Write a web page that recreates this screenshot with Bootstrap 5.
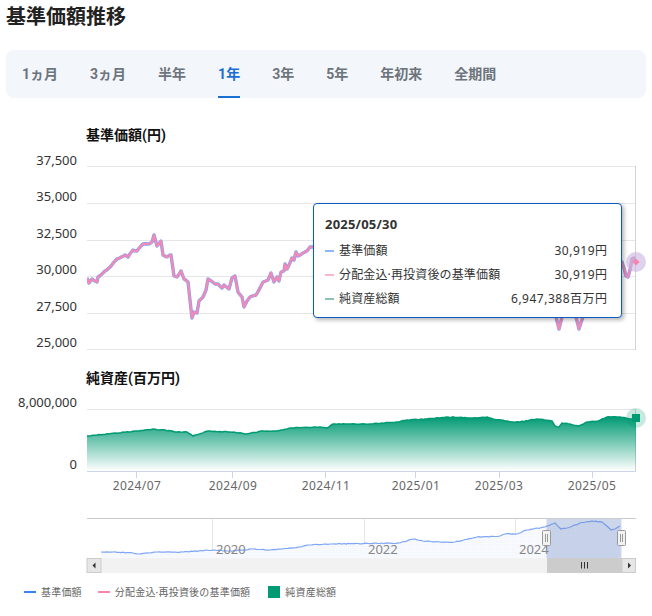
<!DOCTYPE html>
<html lang="ja">
<head>
<meta charset="utf-8">
<title>基準価額推移</title>
<link href="https://cdn.jsdelivr.net/npm/bootstrap@5.3.0/dist/css/bootstrap.min.css" rel="stylesheet">
<style>
html,body{height:616px;overflow:hidden}
body{background:#fff;font-family:"Noto Sans","Noto Sans CJK JP",sans-serif;color:#222}
.page-title{font-size:20px;font-weight:700;line-height:20px;padding:7px 0 0 6px;height:50px;margin:0;color:#222;font-family:Roboto,"Noto Sans CJK JP",sans-serif}
.range-tabs{height:48px;margin:0 6px 22px;padding-left:16px;gap:32px;background:#f3f6fa;border-radius:8px;flex-wrap:nowrap;font-family:Roboto,"Noto Sans CJK JP",sans-serif}
.range-tabs .nav-link{padding:0;height:48px;line-height:48px;font-size:14px;font-weight:700;color:#6d747c;border-bottom:2px solid transparent;white-space:nowrap}
.range-tabs .nav-link.active{color:#1a6fd4;border-bottom-color:#1a6fd4}
.chart-wrap{position:relative;width:652px;height:460px}
.chart-wrap svg{display:block}
.axis-y{font-size:13px;fill:#333;text-anchor:end}
.axis-x{font-size:12px;letter-spacing:.4px;fill:#666;text-anchor:middle}
.axis-nav{font-size:13px;fill:#888}
.chart-head{font-size:14px;font-weight:700;fill:#111;font-family:Roboto,"Noto Sans CJK JP",sans-serif}
.hint-box{position:absolute;left:313px;top:83px;width:309px;height:115px;padding:11px 14px 0 11px;background:#fff;border:1px solid #0a5cbf;border-radius:4px;box-shadow:2px 2px 4px rgba(0,0,0,.3);font-size:12px;color:#333}
.hint-date{font-size:13px;font-weight:700;line-height:18px;margin-bottom:6px;letter-spacing:.2px}
.hint-row{height:24px;line-height:24px;letter-spacing:.15px}
.hint-val{letter-spacing:.5px;margin-right:-.5px}
.hint-dash{width:9px;height:2px;margin-right:5px;flex:none}
.chart-key{height:24px;padding-left:24px;font-size:10px;color:#666;letter-spacing:.2px}
.key-dash{width:12px;height:2px;margin-right:5px}
.key-box{width:12px;height:12px;background:#009a73;margin-right:5px}
</style>
</head>
<body>
<h1 class="page-title">基準価額推移</h1>
<ul class="nav range-tabs">
<li class="nav-item"><a class="nav-link" href="#">1ヵ月</a></li>
<li class="nav-item"><a class="nav-link" href="#">3ヵ月</a></li>
<li class="nav-item"><a class="nav-link" href="#">半年</a></li>
<li class="nav-item"><a class="nav-link active" href="#">1年</a></li>
<li class="nav-item"><a class="nav-link" href="#">3年</a></li>
<li class="nav-item"><a class="nav-link" href="#">5年</a></li>
<li class="nav-item"><a class="nav-link" href="#">年初来</a></li>
<li class="nav-item"><a class="nav-link" href="#">全期間</a></li>
</ul>
<div class="chart-wrap">
<svg width="652" height="460" viewBox="0 120 652 460" xmlns="http://www.w3.org/2000/svg">
<defs>
<linearGradient id="areaFade" x1="0" y1="0" x2="0" y2="1"><stop offset="0" stop-color="#009a73"/><stop offset="1" stop-color="#009a73" stop-opacity="0"/></linearGradient>
<clipPath id="plotClip"><rect x="87" y="160" width="549" height="190"/></clipPath>
<pattern id="navDots" width="2" height="2" patternUnits="userSpaceOnUse"><rect width="2" height="2" fill="#f8fafe"/><rect width="1" height="1" fill="#eff4fd"/></pattern>
</defs>
<text class="chart-head" x="86" y="140">基準価額(円)</text>
<g stroke="#e6e6e6" stroke-width="1">
<line x1="87" x2="636" y1="166.5" y2="166.5"/><line x1="87" x2="636" y1="203.5" y2="203.5"/><line x1="87" x2="636" y1="240.5" y2="240.5"/><line x1="87" x2="636" y1="276.5" y2="276.5"/><line x1="87" x2="636" y1="313.5" y2="313.5"/><line x1="87" x2="636" y1="349.5" y2="349.5"/>
<line x1="635.5" x2="635.5" y1="166" y2="350" stroke="#d4d4d4"/>
</g>
<g class="axis-y">
<text x="77" y="165">37,500</text><text x="77" y="201">35,000</text><text x="77" y="238">32,500</text><text x="77" y="274">30,000</text><text x="77" y="311">27,500</text><text x="77" y="347">25,000</text>
</g>
<g fill="none" stroke-linejoin="round" clip-path="url(#plotClip)">
<polyline class="jag" data-amp="0.6" stroke="#7ea6f5" stroke-width="3.4" points="87,278 89,283 92,279 97,282 98,277 103,273 110,267 117,259 125,255 128,257 133,250 137,251 143,244 148,244 152,242 154,235 157,246 161,241 163,255 167,257 171,255 174,276 177,277 181,271 184,279 188,282 192,318 194,312 197,313 199,301 203,297 206,290 208,279 215,284 218,284 222,288 224,285 229,289 232,278 235,276 238,292 242,297 244,307 247,301 250,297 256,295 263,282 268,280 271,273 274,282 277,277 279,281 281,272 284,271 285,264 287,269 292,258 294,260 296,252 298,256 303,253 307,251 310,247 313,247 350,240 450,225 520,240 550,300 556,317 559,329 562,317 570,300 576,317 579,329 583,317 600,290 615,262 622,262 624,268 626,276 628,277 630,270 632,259 634,258 636,262"/>
<polyline class="jag" data-amp="0.6" stroke="#f588b5" stroke-width="2.2" points="87,278 89,283 92,279 97,282 98,277 103,273 110,267 117,259 125,255 128,257 133,250 137,251 143,244 148,244 152,242 154,235 157,246 161,241 163,255 167,257 171,255 174,276 177,277 181,271 184,279 188,282 192,318 194,312 197,313 199,301 203,297 206,290 208,279 215,284 218,284 222,288 224,285 229,289 232,278 235,276 238,292 242,297 244,307 247,301 250,297 256,295 263,282 268,280 271,273 274,282 277,277 279,281 281,272 284,271 285,264 287,269 292,258 294,260 296,252 298,256 303,253 307,251 310,247 313,247 350,240 450,225 520,240 550,300 556,317 559,329 562,317 570,300 576,317 579,329 583,317 600,290 615,262 622,262 624,268 626,276 628,277 630,270 632,259 634,258 636,262"/>
</g>
<circle cx="636" cy="262" r="10" fill="#c9b4e0" fill-opacity=".6"/>
<path d="M636 258.5l3.5 3.5-3.5 3.5-3.5-3.5z" fill="#f584ae"/>

<text class="chart-head" x="86" y="383">純資産(百万円)</text>
<line x1="87" x2="636" y1="409.5" y2="409.5" stroke="#e6e6e6"/>
<line x1="635.5" x2="635.5" y1="409" y2="471" stroke="#d4d4d4"/>
<g class="axis-y"><text x="77" y="407">8,000,000</text><text x="77" y="469">0</text></g>
<polygon id="areaFill" fill="url(#areaFade)" data-base="471" points=""/>
<polyline class="jag" data-amp="0.35" data-fill="areaFill" fill="none" stroke="#009a73" stroke-width="1.5" points="87,436 137,431 153,429 172,431 175,432 187,432 193,436 208,431 230,432 234,432 245,434 263,431 277,431 290,428 320,427 327,428 333,424 347,424 370,424 397,422 407,420 427,419 447,417 473,418 487,417 493,419 513,422 520,422 537,419 552,421 555,426 559,427 562,423 570,424 579,426 587,422 598,421 607,417 620,417 630,419 636,418"/>
<line x1="87" x2="636" y1="471.5" y2="471.5" stroke="#ccd6eb"/>
<g stroke="#ccd6eb"><line x1="136.5" x2="136.5" y1="471" y2="478"/><line x1="232.5" x2="232.5" y1="471" y2="478"/><line x1="325.5" x2="325.5" y1="471" y2="478"/><line x1="415.5" x2="415.5" y1="471" y2="478"/><line x1="499.5" x2="499.5" y1="471" y2="478"/><line x1="592.5" x2="592.5" y1="471" y2="478"/></g>
<circle cx="636" cy="418" r="10" fill="#009a73" fill-opacity=".22"/>
<rect x="632" y="414" width="8" height="8" fill="#009a73"/>
<g class="axis-x"><text x="137" y="490">2024/07</text><text x="233" y="490">2024/09</text><text x="326" y="490">2024/11</text><text x="416" y="490">2025/01</text><text x="499" y="490">2025/03</text><text x="592" y="490">2025/05</text></g>

<line x1="87" x2="636" y1="518.5" y2="518.5" stroke="#cccccc"/>
<g stroke="#e6e6e6"><line x1="212.5" x2="212.5" y1="519" y2="558"/><line x1="364.5" x2="364.5" y1="519" y2="558"/><line x1="515.5" x2="515.5" y1="519" y2="558"/></g>
<polygon id="navFill" fill="url(#navDots)" data-base="558" points=""/>
<polyline class="jag" data-amp="0.4" data-fill="navFill" fill="none" stroke="#7ea6f5" stroke-width="1.2" points="101,552 113,552 133,553 138,554 157,552 183,552 213,550 230,551 253,549 270,550 300,547 308,545 330,544 400,543 413,539 423,541 440,542 455,542 477,537 500,536 505,534 517,534 527,530 545,527 555,523 561,529 567,528 580,523 592,521 602,522 611,530 615,529 620,526"/>
<g class="axis-nav"><text x="216" y="554">2020</text><text x="368" y="554">2022</text><text x="519" y="554">2024</text></g>
<rect x="546.5" y="519" width="75" height="39" fill="#6685c2" fill-opacity=".33"/>
<rect x="87" y="558" width="549" height="15" fill="#f2f2f2"/>
<rect x="87" y="558.5" width="14" height="14" fill="#e6e6e6" stroke="#cccccc"/>
<path d="M95.5 562.5v6l-3-3z" fill="#333"/>
<rect x="547" y="558" width="75" height="15" fill="#cccccc"/>
<rect x="622" y="558.5" width="13.5" height="14" fill="#e6e6e6" stroke="#cccccc"/>
<path d="M628 562.5v6l3-3z" fill="#333"/>
<g stroke="#333"><line x1="581.5" x2="581.5" y1="562" y2="568.5"/><line x1="584.5" x2="584.5" y1="562" y2="568.5"/><line x1="587.5" x2="587.5" y1="562" y2="568.5"/></g>
<g fill="#f2f2f2" stroke="#999999"><rect x="542.5" y="530.5" width="8" height="15" rx="1"/><rect x="617.5" y="530.5" width="8" height="15" rx="1"/></g>
<g stroke="#999999"><line x1="545.5" x2="545.5" y1="534" y2="542"/><line x1="547.5" x2="547.5" y1="534" y2="542"/><line x1="620.5" x2="620.5" y1="534" y2="542"/><line x1="622.5" x2="622.5" y1="534" y2="542"/></g>
</svg>
<div class="hint-box">
<div class="hint-date">2025/05/30</div>
<div class="hint-row d-flex align-items-center"><span class="hint-dash" style="background:#8fb6fb"></span><span class="flex-grow-1">基準価額</span><span class="hint-val">30,919円</span></div>
<div class="hint-row d-flex align-items-center"><span class="hint-dash" style="background:#f9b6cf"></span><span class="flex-grow-1">分配金込·再投資後の基準価額</span><span class="hint-val">30,919円</span></div>
<div class="hint-row d-flex align-items-center"><span class="hint-dash" style="background:#8fc0b0"></span><span class="flex-grow-1">純資産総額</span><span class="hint-val">6,947,388百万円</span></div>
</div>
</div>
<div class="chart-key d-flex align-items-center">
<span class="key-dash" style="background:#3b82f6"></span><span style="margin-right:16px">基準価額</span>
<span class="key-dash" style="background:#f584ae"></span><span style="margin-right:18px">分配金込·再投資後の基準価額</span>
<span class="key-box"></span><span>純資産総額</span>
</div>
<script>
// Series are sampled sparsely; add the same fine daily wobble to each line and build area fills from it.
document.querySelectorAll('polyline.jag').forEach(function (line) {
  var amp = parseFloat(line.dataset.amp), seed = 7, out = [];
  var pts = line.getAttribute('points').trim().split(/\s+/).map(function (p) { return p.split(',').map(Number); });
  function rnd() { seed = (seed * 16807) % 2147483647; return (seed % 1000) / 500 - 1; }
  pts.forEach(function (p, i) {
    out.push(p.join(','));
    var n = pts[i + 1];
    if (!n) return;
    for (var x = p[0] + 2; x < n[0] - 1; x += 2) {
      var y = p[1] + (n[1] - p[1]) * (x - p[0]) / (n[0] - p[0]) + rnd() * amp;
      out.push(x + ',' + y.toFixed(1));
    }
  });
  line.setAttribute('points', out.join(' '));
  if (line.dataset.fill) {
    var fill = document.getElementById(line.dataset.fill), base = fill.dataset.base;
    var last = pts[pts.length - 1][0], first = pts[0][0];
    fill.setAttribute('points', out.join(' ') + ' ' + last + ',' + base + ' ' + first + ',' + base);
  }
});
</script>
<script src="https://cdn.jsdelivr.net/npm/bootstrap@5.3.0/dist/js/bootstrap.bundle.min.js"></script>
</body>
</html>
